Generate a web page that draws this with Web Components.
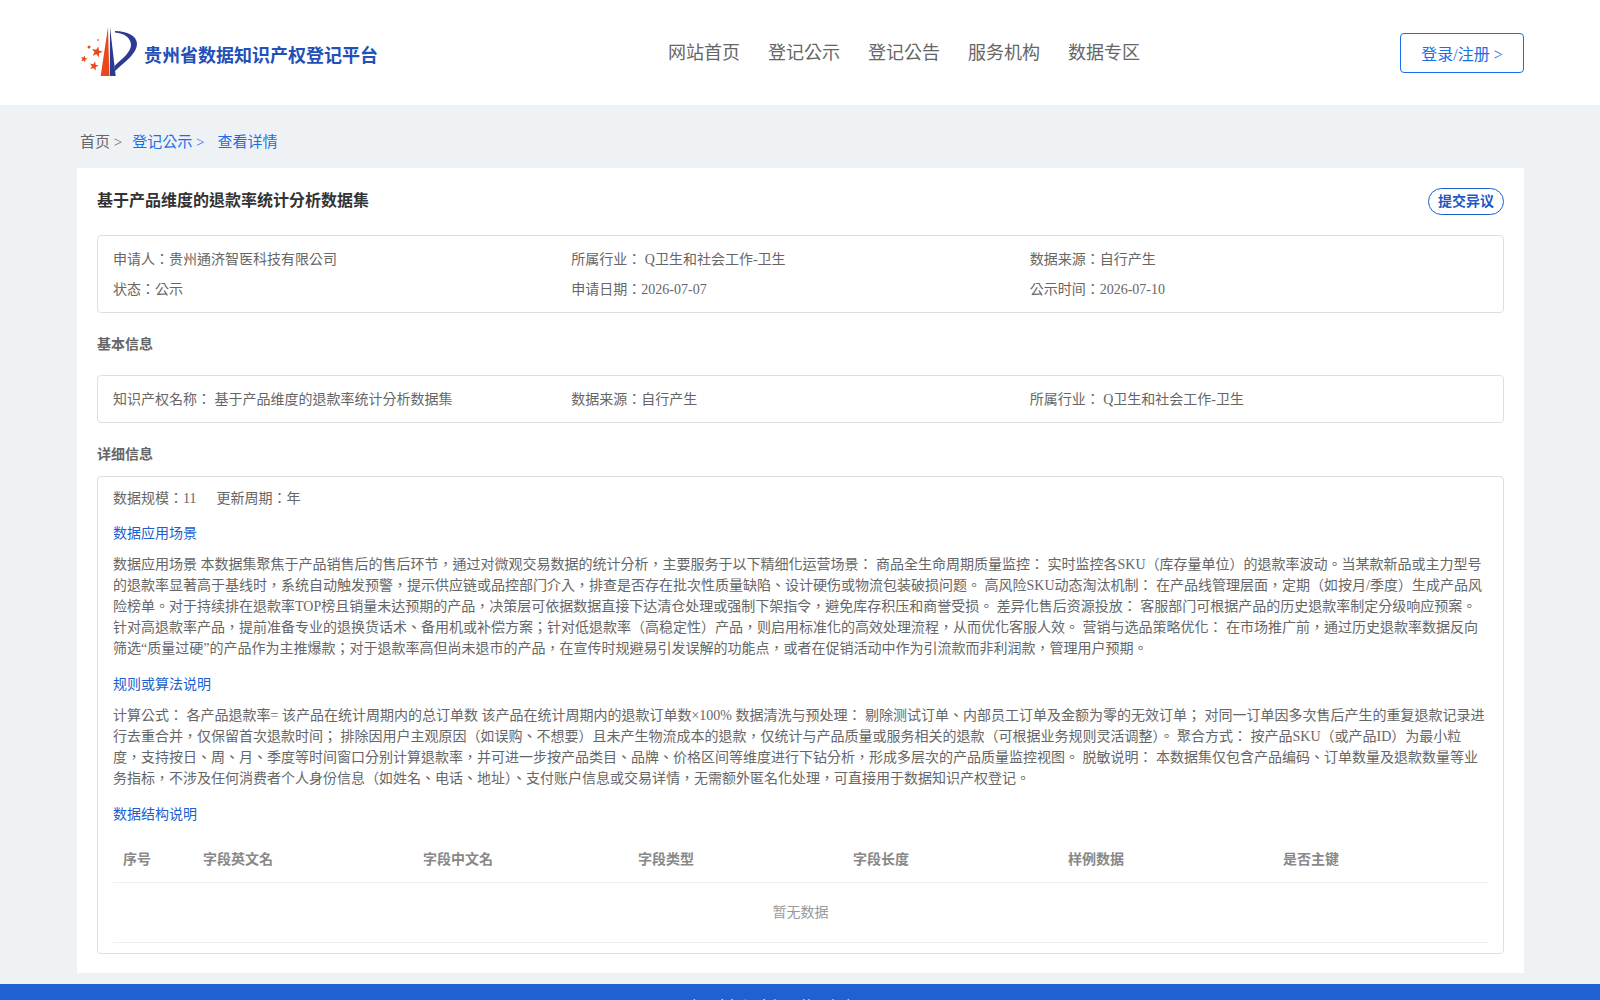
<!DOCTYPE html>
<html><head><meta charset="utf-8">
<style>
html,body{margin:0;padding:0;height:1000px;overflow:hidden}
body{background:#eff2f5;font-family:"Liberation Serif","Noto Sans CJK TC",serif;color:#666;font-size:14px}
</style></head><body>
<site-header></site-header>
<bread-crumb></bread-crumb>
<detail-card>
  <card-title></card-title>
  <info-grid style="--py:7px 15px 9px" data-rows='[["申请人：贵州通济智医科技有限公司","所属行业： Q卫生和社会工作-卫生","数据来源：自行产生"],["状态：公示","申请日期：2026-07-07","公示时间：2026-07-10"]]'></info-grid>
  <section-head style="--top:22px;--bottom:20px">基本信息</section-head>
  <info-grid style="--py:7px 15px 9px" data-rows='[["知识产权名称： 基于产品维度的退款率统计分析数据集","数据来源：自行产生","所属行业： Q卫生和社会工作-卫生"]]'></info-grid>
  <section-head style="--top:22px;--bottom:11px">详细信息</section-head>
  <detail-box>
    <div class="meta"><span>数据规模：11</span><span>更新周期：年</span></div>
    <h4>数据应用场景</h4>
    <p>数据应用场景 本数据集聚焦于产品销售后的售后环节，通过对微观交易数据的统计分析，主要服务于以下精细化运营场景： 商品全生命周期质量监控： 实时监控各SKU（库存量单位）的退款率波动。当某款新品或主力型号的退款率显著高于基线时，系统自动触发预警，提示供应链或品控部门介入，排查是否存在批次性质量缺陷、设计硬伤或物流包装破损问题。 高风险SKU动态淘汰机制： 在产品线管理层面，定期（如按月/季度）生成产品风险榜单。对于持续排在退款率TOP榜且销量未达预期的产品，决策层可依据数据直接下达清仓处理或强制下架指令，避免库存积压和商誉受损。 差异化售后资源投放： 客服部门可根据产品的历史退款率制定分级响应预案。针对高退款率产品，提前准备专业的退换货话术、备用机或补偿方案；针对低退款率（高稳定性）产品，则启用标准化的高效处理流程，从而优化客服人效。 营销与选品策略优化： 在市场推广前，通过历史退款率数据反向筛选“质量过硬”的产品作为主推爆款；对于退款率高但尚未退市的产品，在宣传时规避易引发误解的功能点，或者在促销活动中作为引流款而非利润款，管理用户预期。</p>
    <h4>规则或算法说明</h4>
    <p>计算公式： 各产品退款率= 该产品在统计周期内的总订单数 该产品在统计周期内的退款订单数×100% 数据清洗与预处理： 剔除测试订单、内部员工订单及金额为零的无效订单； 对同一订单因多次售后产生的重复退款记录进行去重合并，仅保留首次退款时间； 排除因用户主观原因（如误购、不想要）且未产生物流成本的退款，仅统计与产品质量或服务相关的退款（可根据业务规则灵活调整）。 聚合方式： 按产品SKU（或产品ID）为最小粒度，支持按日、周、月、季度等时间窗口分别计算退款率，并可进一步按产品类目、品牌、价格区间等维度进行下钻分析，形成多层次的产品质量监控视图。 脱敏说明： 本数据集仅包含产品编码、订单数量及退款数量等业务指标，不涉及任何消费者个人身份信息（如姓名、电话、地址）、支付账户信息或交易详情，无需额外匿名化处理，可直接用于数据知识产权登记。</p>
    <h4>数据结构说明</h4>
    <empty-table></empty-table>
  </detail-box>
</detail-card>
<site-footer></site-footer>
<script>
function def(name, html, init){
  customElements.define(name, class extends HTMLElement{
    constructor(){super();this.attachShadow({mode:'open'}).innerHTML=html;}
    connectedCallback(){if(init)init(this);}
  });
}
function star(cx,cy,r){
  let d='';
  for(let i=0;i<10;i++){
    const a=-Math.PI/2+i*Math.PI/5+0.25, q=i%2?r*0.42:r;
    d+=(i?'L':'M')+(cx+q*Math.cos(a)).toFixed(2)+' '+(cy+q*Math.sin(a)).toFixed(2);
  }
  return `<path d="${d}Z" fill="#e8481c"/>`;
}
def('site-header',`<style>
:host{display:flex;box-sizing:border-box;height:105px;background:#fff;padding:0 76px 0 80px;align-items:center;justify-content:space-between}
.logo{display:flex;align-items:center;gap:4px;width:500px}
.logo svg{display:block;margin-top:-1px}
.name{font:bold 18px "Liberation Serif","Noto Sans CJK TC",serif;color:#2350b8;margin-top:3px}
nav{display:flex;gap:28px;font-size:18px;color:#666;flex:1;margin-left:88px;margin-bottom:3px}
a.login{box-sizing:border-box;width:124px;height:40px;border:1px solid #1a6fe8;border-radius:4px;color:#1a6fe8;font-size:16px;display:flex;align-items:center;justify-content:center}
</style>
<div class="logo"><svg width="60" height="54" viewBox="0 0 60 54">
<path d="M28 2L29.300 51L20.700 51Z" fill="#e8481c"/>
<path d="M30 2L35.700 51L29.800 51Z" fill="#2b3a92"/>
<path d="M35 6C47 6 57 11 57 19C57 28 46 36 35 46L34.500 41C43 33 51 27 51 20C51 13 44 8 35 7.500Z" fill="#2b3a92"/>
${star(17,27,5.8)}${star(14,41,4.8)}${star(4,34,3.6)}
<circle cx="9" cy="22" r="1.500" fill="#e8481c"/><circle cx="18" cy="15" r="1" fill="#e8775a"/>
</svg><span class="name">贵州省数据知识产权登记平台</span></div>
<nav><span>网站首页</span><span>登记公示</span><span>登记公告</span><span>服务机构</span><span>数据专区</span></nav>
<a class="login">登录/注册 &gt;</a>`);
def('bread-crumb',`<style>
:host{display:flex;box-sizing:border-box;height:63px;padding:8px 80px 0;align-items:center;font-size:15px;color:#666}
.b{color:#1a6fe8}
</style><span>首页 &gt;</span><span class="b" style="margin-left:10px">登记公示 &gt;</span><span class="b" style="margin-left:13px">查看详情</span>`);
def('detail-card',`<style>
:host{display:block;box-sizing:border-box;width:1447px;height:805px;margin-left:77px;background:#fff;padding:20px}
</style><slot></slot>`);
def('card-title',`<style>
:host{display:flex;justify-content:space-between;align-items:flex-start;height:47px;font-size:16px}
b{color:#333;line-height:26px}
.obj{box-sizing:border-box;width:76px;height:27px;border:1px solid #1a5fd0;border-radius:14px;color:#2158c4;font-weight:bold;font-size:14px;display:flex;align-items:center;justify-content:center;line-height:1}
</style><b>基于产品维度的退款率统计分析数据集</b><span class="obj">提交异议</span>`);
def('info-grid',`<style>
:host{display:block;box-sizing:border-box;border:1px solid #dcdfe6;border-radius:4px;padding:var(--py);font-size:14px;color:#666}
.g{display:grid;grid-template-columns:repeat(3,1fr);grid-auto-rows:30px;align-items:center}
</style><div class="g"></div>`, el=>{
  el.shadowRoot.querySelector('.g').innerHTML=JSON.parse(el.dataset.rows).flat().map(t=>`<span>${t}</span>`).join('');
});
def('section-head',`<style>
:host{display:block;font-size:14px;font-weight:bold;color:#666;line-height:20px;margin:var(--top) 0 var(--bottom)}
</style><slot></slot>`);
def('detail-box',`<style>
:host{display:block;box-sizing:border-box;height:478px;border:1px solid #dcdfe6;border-radius:4px;padding:0 15px;font-size:14px;color:#666}
::slotted(.meta){display:flex;gap:20px;height:42px;line-height:43px;align-items:flex-start}
::slotted(h4){margin:0;font-size:14px;font-weight:normal;color:#1a5fd0;line-height:20px;padding-top:5px}
::slotted(p){margin:10px 0 11px;line-height:21px}
</style><slot></slot>`);
def('empty-table',`<style>
:host{display:block;margin-top:10px}
.r{display:grid;grid-template-columns:90px 220px 215px 215px 215px 215px 1fr;height:48px;align-items:center;font-weight:bold;color:#888;border-bottom:1px solid #ebeef5;padding-bottom:1px;box-sizing:border-box}
.r span:first-child{padding-left:10px}
.e{height:60px;box-sizing:border-box;padding-bottom:3px;display:flex;align-items:center;justify-content:center;color:#999;border-bottom:1px solid #ebeef5}
</style><div class="r"><span>序号</span><span>字段英文名</span><span>字段中文名</span><span>字段类型</span><span>字段长度</span><span>样例数据</span><span>是否主键</span></div><div class="e">暂无数据</div>`);
def('site-footer',`<style>
:host{display:flex;justify-content:center;box-sizing:border-box;height:60px;margin-top:11px;background:#2160d0;color:#fff;font-size:14px;padding:11px 54px 0 0}
</style><span>©贵州省知识产权公共服务中心</span>`);
</script>
</body></html>
